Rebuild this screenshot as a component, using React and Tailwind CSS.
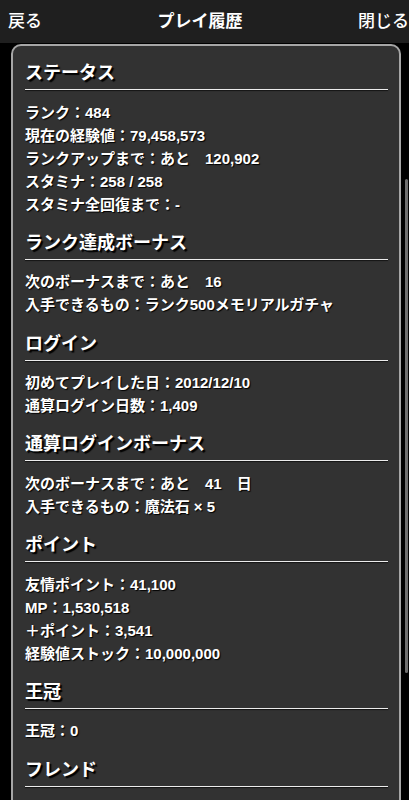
const FONT = { fontFamily: '"Liberation Sans", "Noto Sans CJK JP", sans-serif' };

const sections = [
  {
    title: 'ステータス',
    rows: [
      'ランク：484',
      '現在の経験値：79,458,573',
      'ランクアップまで：あと　120,902',
      'スタミナ：258 / 258',
      'スタミナ全回復まで：-',
    ],
  },
  {
    title: 'ランク達成ボーナス',
    rows: ['次のボーナスまで：あと　16', '入手できるもの：ランク500メモリアルガチャ'],
  },
  {
    title: 'ログイン',
    rows: ['初めてプレイした日：2012/12/10', '通算ログイン日数：1,409'],
  },
  {
    title: '通算ログインボーナス',
    rows: ['次のボーナスまで：あと　41　日', '入手できるもの：魔法石 × 5'],
  },
  {
    title: 'ポイント',
    rows: ['友情ポイント：41,100', 'MP：1,530,518', '＋ポイント：3,541', '経験値ストック：10,000,000'],
  },
  {
    title: '王冠',
    rows: ['王冠：0'],
  },
  {
    title: 'フレンド',
    rows: [],
  },
];

function Section({ title, rows }) {
  return (
    <div className="pb-[14.3px]">
      <h2 className="text-[18px] leading-[26px] font-bold text-white [text-shadow:2px_2px_1px_#000]">{title}</h2>
      <div className="mt-[3px] h-px bg-[#ececec] shadow-[0_1px_1px_#111]" />
      <div className="mt-[10.5px] flex flex-col">
        {rows.map((r) => (
          <div key={r} className="text-[15px] leading-[23px] font-bold text-white whitespace-pre [text-shadow:1px_1px_1px_#000]">
            {r}
          </div>
        ))}
      </div>
    </div>
  );
}

export default function App() {
  return (
    <div style={FONT} className="relative h-[800px] w-[409px] overflow-hidden bg-black">
      {/* top bar */}
      <div className="h-[43px] bg-[#1f1f1f] flex items-center justify-between pl-[8px] pr-0 text-white text-[17px]">
        <span className="font-medium">戻る</span>
        <span className="font-bold">プレイ履歴</span>
        <span className="font-medium">閉じる</span>
      </div>

      {/* history panel */}
      <div className="mt-px ml-[11px] mr-[8px] rounded-[10px] border-2 border-[#a6a6a6] bg-[#323232] pt-[14px] pl-[12px] pr-[11px] pb-[60px]">
        {sections.map((s) => (
          <Section key={s.title} {...s} />
        ))}
      </div>

      {/* scroll indicator */}
      <div className="absolute left-[405px] top-[179px] h-[494px] w-[3px] rounded-full bg-[#6e6e6e]" />
    </div>
  );
}
